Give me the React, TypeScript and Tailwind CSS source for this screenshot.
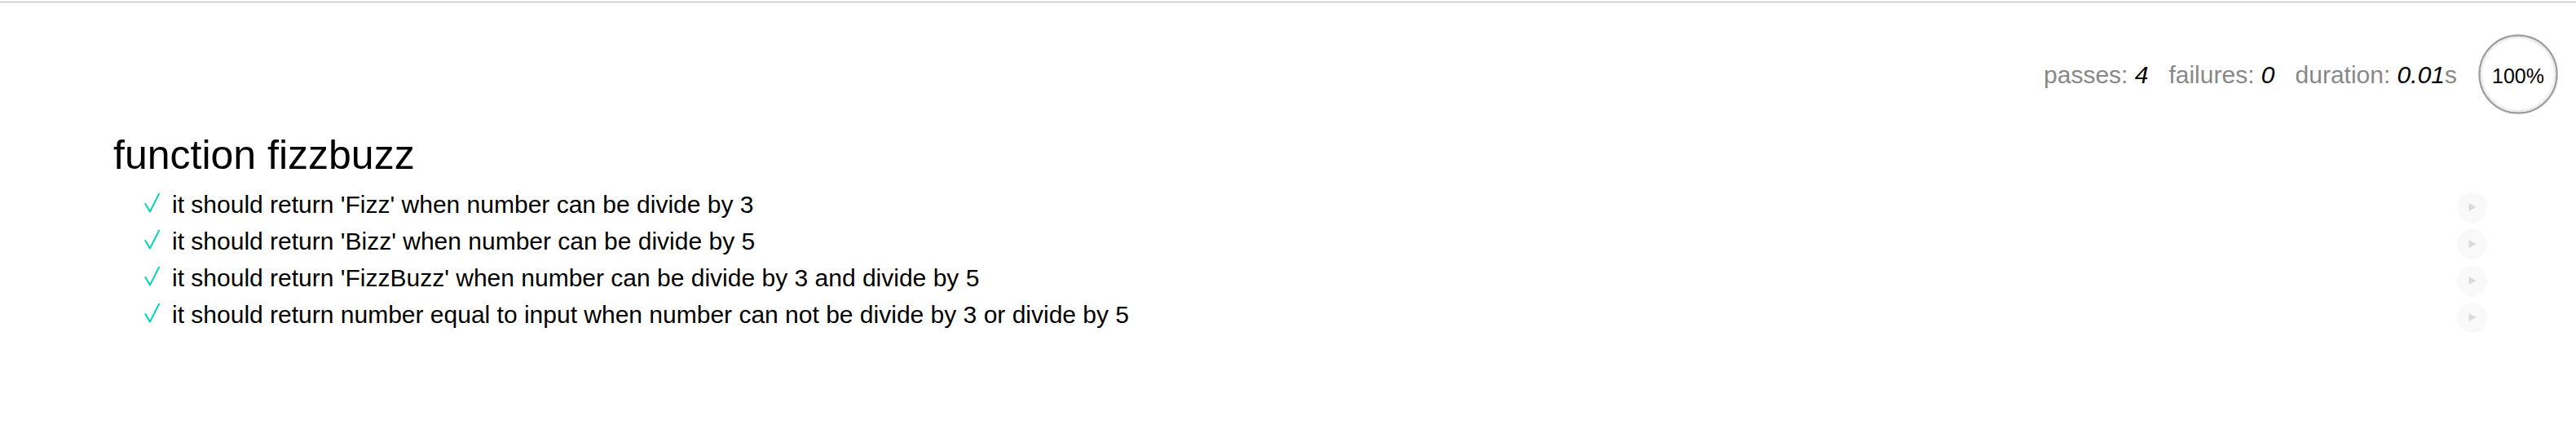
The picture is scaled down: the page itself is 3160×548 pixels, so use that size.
import React from "react";

const tests = [
  "it should return 'Fizz' when number can be divide by 3",
  "it should return 'Bizz' when number can be divide by 5",
  "it should return 'FizzBuzz' when number can be divide by 3 and divide by 5",
  "it should return number equal to input when number can not be divide by 3 or divide by 5",
];

const stats = [
  { label: "passes:", value: "4" },
  { label: "failures:", value: "0" },
  { label: "duration:", value: "0.01", unit: "s" },
];

const Check = () => (
  <svg width="22" height="45" viewBox="0 0 22 45" className="shrink-0">
    <polyline
      points="2.3,22 8,31.4 19,9.7"
      fill="none"
      stroke="#00d6b2"
      strokeWidth="2"
      strokeLinecap="round"
      strokeLinejoin="round"
    />
  </svg>
);

const Progress = () => (
  <svg width="100" height="100" viewBox="0 0 100 100" className="shrink-0">
    <circle cx="50" cy="50" r="47.5" fill="none" stroke="#9f9f9f" strokeWidth="2.5" />
    <circle cx="50" cy="50" r="45" fill="none" stroke="#eeeeee" strokeWidth="2.5" />
    <text
      x="50"
      y="60.7"
      textAnchor="middle"
      fontSize="25"
      fill="#000"
      fontFamily="'Liberation Sans', Arial, sans-serif"
    >
      100%
    </text>
  </svg>
);

export default function App() {
  return (
    <div className="w-[3160px] h-[548px] bg-white text-black font-['Liberation_Sans',Arial,sans-serif]">
      <div className="pt-[2px]">
        <div className="h-px bg-[#b4b4b4]" />
      </div>

      {/* stats */}
      <div className="mt-[38px] flex justify-end items-start gap-[25px] pr-[21px]">
        {stats.map((s) => (
          <div key={s.label} className="pt-[27.5px] text-[30px] leading-[45px] text-[#888] whitespace-pre">
            {s.label + " "}
            <em className="text-black">{s.value}</em>
            {s.unit}
          </div>
        ))}
        <Progress />
      </div>

      {/* report */}
      <div className="pl-[139px] pr-[109px]">
        <h1 className="mt-[12px] text-[50px] leading-[75px] font-normal">function fizzbuzz</h1>
        <ul className="ml-[37px]">
          {tests.map((t) => (
            <li key={t} className="relative flex h-[45px] items-start">
              <Check />
              <span className="ml-[13px] text-[30px] leading-[45px] whitespace-nowrap">{t}</span>
              <span className="absolute right-0 top-[7.5px] flex h-[37.5px] w-[37.5px] items-center justify-center rounded-full bg-[#eee] opacity-30">
                <svg width="10" height="10" viewBox="0 0 10 10" className="ml-[1px]">
                  <polygon points="0.5,0 9.5,5 0.5,10" fill="#888" />
                </svg>
              </span>
            </li>
          ))}
        </ul>
      </div>
    </div>
  );
}
